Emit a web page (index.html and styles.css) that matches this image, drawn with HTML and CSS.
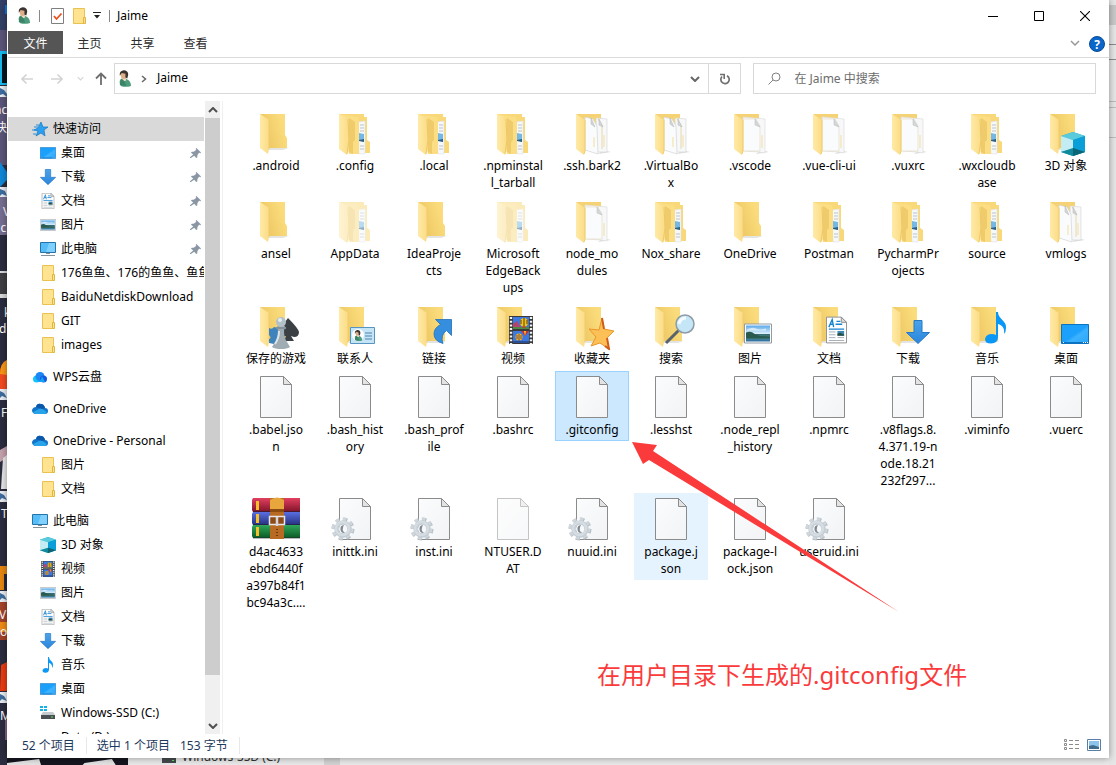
FILE: index.html
```html
<!DOCTYPE html>
<html lang="zh-CN">
<head>
<meta charset="utf-8">
<title>Jaime</title>
<link rel="stylesheet" href="styles.css">
</head>
<body>
<svg class="defs" aria-hidden="true">
  <defs>
    <linearGradient id="gFlap" x1="0" x2="1"><stop offset="0" stop-color="#ffeaa6"/><stop offset="1" stop-color="#fbdc86"/></linearGradient>
    <linearGradient id="gBack" x1="0" x2="1" y1="1" y2="0.6"><stop offset="0" stop-color="#e9c25c"/><stop offset="1" stop-color="#fbdc7c"/></linearGradient>
    <linearGradient id="gPage" x1="0" y1="0" x2="1" y2="1"><stop offset="0" stop-color="#fbfcfd"/><stop offset="1" stop-color="#f1f3f5"/></linearGradient>
    <linearGradient id="gBlue" x1="0" y1="0" x2="1" y2="1"><stop offset="0" stop-color="#1ba0fb"/><stop offset="0.5" stop-color="#1ba0fb"/><stop offset="0.6" stop-color="#3db2ff"/><stop offset="1" stop-color="#2aa6fb"/></linearGradient>
    <linearGradient id="gArrow" x1="0" y1="0" x2="0" y2="1"><stop offset="0" stop-color="#4ba3ea"/><stop offset="1" stop-color="#2b86dc"/></linearGradient>
    <linearGradient id="gRed" x1="0" y1="0" x2="0" y2="1"><stop offset="0" stop-color="#e2405f"/><stop offset="1" stop-color="#7d1328"/></linearGradient>
    <linearGradient id="gInd" x1="0" y1="0" x2="0" y2="1"><stop offset="0" stop-color="#5a6fe0"/><stop offset="1" stop-color="#25307e"/></linearGradient>
    <linearGradient id="gGrn" x1="0" y1="0" x2="0" y2="1"><stop offset="0" stop-color="#2fa85a"/><stop offset="1" stop-color="#0b5a25"/></linearGradient>
    <linearGradient id="gSky" x1="0" y1="0" x2="0" y2="1"><stop offset="0" stop-color="#5aa9ea"/><stop offset="0.5" stop-color="#d9eefa"/><stop offset="0.55" stop-color="#356b6b"/><stop offset="0.75" stop-color="#4d8c8c"/><stop offset="1" stop-color="#2e6ea6"/></linearGradient>

    <symbol id="folder" viewBox="0 0 48 48">
      <path d="M16 39H37L39 38 31 41H17Z" fill="#e4e4e4"/>
      <path d="M8 5H33V26L35 29V39H16L9 10Z" fill="url(#gBack)"/>
      <path d="M8 5L17 11V40L16 45 8 39Z" fill="url(#gFlap)"/>
      <path d="M17 11V40" stroke="#f0cc6e" fill="none"/>
    </symbol>
    <symbol id="folder-full" viewBox="0 0 48 48">
      <path d="M8 5H33V8H36V31L39 33V44H28L14 30Z" fill="#f8d878"/>
      <path d="M27 13L34 12V45H28Z" fill="#f6f8fa" stroke="#dfe3e6" stroke-width=".6"/>
      <path d="M29 16h4M29 19h4M29 22h4M29 37h4M29 40h4" stroke="#b9c4cc"/>
      <path d="M28 24l5 1v8l-5-2Z" fill="#75b8e6"/><path d="M28 31l5-1v3l-5-1Z" fill="#2c5f86"/>
      <path d="M8 5L27 8 28 13V45L18 45Z" fill="#fbdd83"/>
      <path d="M18 9L24 13V31L22 33V45L18 43Z" fill="#efcb6c"/>
      <path d="M8 5L17 9 18 31 16 46 8 40Z" fill="url(#gFlap)"/>
      <path d="M17 10L18 31 16 45" fill="none" stroke="#edc965"/>
    </symbol>
    <symbol id="folder-doc" viewBox="0 0 48 48">
      <path d="M35 41L43 43 30 45Z" fill="#ddd"/>
      <path d="M8 5H33V15H17Z" fill="#f5d374"/>
      <path d="M17 8L39 10V44L33 43 18 42Z" fill="#f7f8f9" stroke="#dcdcdc" stroke-width=".7"/>
      <path d="M17 10H30L34 17V42H17Z" fill="#fafbfc" stroke="#e3d9bd" stroke-width=".6"/>
      <path d="M29 10L34 18 29 16Z" fill="#d5d8da" stroke="#b9b9b9" stroke-width=".5"/>
      <path d="M36 26V39" stroke="#f3df9e"/>
      <path d="M8 5L17 11V42L16 46 8 40Z" fill="url(#gFlap)"/>
      <path d="M17 11V42L16 45" fill="none" stroke="#f0cd6d"/>
    </symbol>
    <symbol id="folder-docs" viewBox="0 0 48 48">
      <path d="M35 41L43 43 30 45Z" fill="#ddd"/>
      <path d="M8 5H33V15H17Z" fill="#f5d374"/>
      <path d="M28 9L39 10V43L29 43Z" fill="#f7f8f9" stroke="#d9d9d9" stroke-width=".7"/>
      <path d="M30 10L34 16V40" fill="none" stroke="#e6d8ac"/>
      <path d="M17 8L25 10 29 17 30 45 17 41Z" fill="#fafbfc" stroke="#d4d4d4" stroke-width=".7"/>
      <path d="M23 9L27 18 23 15ZM31 10l4 8-4-2Z" fill="#d3d6d8" stroke="#b5b5b5" stroke-width=".5"/>
      <path d="M26 28V38M36 26V38" stroke="#f3df9e"/>
      <path d="M8 5L17 11V42L16 46 8 40Z" fill="url(#gFlap)"/>
      <path d="M17 11V42L16 45" fill="none" stroke="#f0cd6d"/>
    </symbol>
    <symbol id="file" viewBox="0 0 48 48">
      <path d="M8.500 3.500H31.500L39.500 11.500V44.500H8.500Z" fill="url(#gPage)" stroke="#8b8b8b"/>
      <path d="M31.500 3.500V11.500H39.500Z" fill="#e3e3e3" stroke="#8b8b8b"/>
    </symbol>
    <symbol id="ini" viewBox="0 0 48 48">
      <use href="#file"/>
      <circle cx="12" cy="34" r="9.500" fill="none" stroke="#b4bec6" stroke-width="4" stroke-dasharray="4 3.460"/>
      <circle cx="11.500" cy="33.500" r="9.500" fill="none" stroke="#cfd7dd" stroke-width="3" stroke-dasharray="3.600 3.860"/>
      <circle cx="12" cy="34" r="6.500" fill="none" stroke="#c6ced5" stroke-width="4.500"/>
      <circle cx="11.500" cy="33.500" r="6.500" fill="none" stroke="#d6dde2" stroke-width="2.500"/>
      <circle cx="12" cy="34" r="4" fill="#f7f8f9"/>
      <path d="M13 30a4 4 0 1 0 1 8q-4-3-1-8Z" fill="#7d8994"/>
    </symbol>
    <symbol id="cube" viewBox="0 0 24 24">
      <path d="M12 0L24 4V20L12 24 0 20V4Z" fill="#1aa9c4"/>
      <path d="M12 0L24 4 12 8 0 4Z" fill="#59cbdc"/>
      <path d="M0 4L12 8V17L0 20Z" fill="#c3ecf3"/>
      <path d="M12 8L24 4V20L12 17Z" fill="#0a9fd8"/>
      <path d="M0 20L12 16 24 20 12 24Z" fill="#128a9e"/><path d="M12 16L24 20 12 24Z" fill="#0c6678"/>
    </symbol>
    <symbol id="film" viewBox="0 0 24 28">
      <path d="M0 0H24V28H0Z" fill="#3a3a3a"/>
      <path d="M2 1V28M22 1V28" stroke="#f2f2f2" stroke-width="2.400" stroke-dasharray="2 1.700"/>
      <path d="M4 1H20V13H4ZM4 15H20V27H4Z" fill="#3b79df"/>
      <path d="M4 8l4-3 3 5 4 3H4Z" fill="#b34470"/><path d="M4 11h16v2H4Z" fill="#4d8b45"/>
      <ellipse cx="15" cy="6.500" rx="4" ry="4.500" fill="#f2c21a"/><path d="M15 2v9M12 4v4M18 4v4" stroke="#453018" stroke-width=".9"/><path d="M13 11h4" stroke="#d43120"/>
      <path d="M12 15h8l-4 5Z" fill="#ca3030"/><path d="M15 15h2l-1 5Z" fill="#f4cc2a"/>
      <ellipse cx="10" cy="21" rx="3.500" ry="3.500" fill="#f3b21f"/><path d="M10 18v7M8 19v4M12 19v4" stroke="#4a3a68" stroke-width=".8"/><path d="M4 25h16v2H4Z" fill="#2c4f96"/>
    </symbol>
    <symbol id="photo" viewBox="0 0 28 20">
      <path d="M.5.5H27.500V19.500H.5Z" fill="#fff" stroke="#929ba3"/>
      <path d="M2 2H26V18H2Z" fill="url(#gSky)"/>
      <path d="M2 9q5-2 8 1t16 3v2H2Z" fill="#2a5a4d"/><path d="M3 6q5-3 9-1t10 0v2H3Z" fill="#fff" opacity=".6"/>
    </symbol>
    <symbol id="doc" viewBox="0 0 22 28">
      <path d="M.5.5H16L21.500 6V27.500H.5Z" fill="#fff" stroke="#8e8e8e"/><path d="M16 .5V6h5.500Z" fill="#ddd" stroke="#8e8e8e"/>
      <path d="M3 11L6.500 3 8 11M4 8h4M11 5h4M10 8h7M3 13h16" stroke="#1683d0" stroke-width="1.400" fill="none"/>
      <path d="M3 16h7M3 19h7M3 22h7M3 25h16M12 22h7" stroke="#a5adb3"/><path d="M12 15h7v5h-7Z" fill="#3e86b5"/><path d="M12 18l3-1 4 2v1h-7Z" fill="#275040"/>
    </symbol>
    <symbol id="down" viewBox="0 0 24 24">
      <path d="M8 .5H16V12.500H23.500L12 23.500.5 12.500H8Z" fill="url(#gArrow)" stroke="#2478c7"/>
    </symbol>
    <symbol id="note" viewBox="0 0 22 32">
      <path d="M11 0h2c0 7 9 9 8 16q0 4-2 6c1-6-2-9-6-10V25q0 6-7 6.500Q0 31.500 0 27q1-5 7-5 2 0 4 1Z" fill="#0b97f5"/>
    </symbol>
    <symbol id="desk" viewBox="0 0 28 20">
      <path d="M.5.5H27.500V19.500H.5Z" fill="url(#gBlue)" stroke="#0b73bf"/>
      <path d="M1 18.500H27" stroke="#0b73bf"/><path d="M2 18.500h1M22 18.500h1M24 18.500h1M26 18.500h1" stroke="#fff"/>
    </symbol>
    <symbol id="person" viewBox="0 0 14 18">
      <path d="M3 17Q0 11 4 9l3-1 3 2q4 2 4 7Q8 19 3 17Z" fill="#4d9c7e"/><path d="M2 16q0-6 3-7l2 3 2 5Z" fill="#3c8468"/>
      <path d="M4 7l4 1 1 3-2 1-3-3Z" fill="#f1d9bf"/>
      <ellipse cx="6" cy="5.500" rx="3" ry="4" fill="#ddb089"/><path d="M2 6Q1 1 6 0q5 0 5 5l-1 4-2-1V4L4 3Z" fill="#3b3330"/>
    </symbol>
    <symbol id="sfolder" viewBox="0 0 16 16">
      <path d="M2.500.5H13.500V15.500H2.500Z" fill="#ffe391" stroke="#e9c251"/><path d="M12.500 9.500H14.500V15.500H12.500Z" fill="#fbe08d" stroke="#e0b73f"/>
    </symbol>
    <symbol id="pc" viewBox="0 0 16 16">
      <path d="M.5 1.500H15.500V11.500H.5Z" fill="#57bdf9" stroke="#2575ab"/><path d="M9 2h6v9H6Z" fill="#7fd0fd"/>
      <path d="M6 12h4v1H6ZM1 14h14v1H1Z" fill="#85929c"/>
    </symbol>
    <symbol id="cloud" viewBox="0 0 16 16">
      <path d="M3 13Q0 12 0 9q1-3 4-3 1-4 5-3 3 0 4 4 3 0 3 3 0 3-3 3Z" fill="#1273ca"/>
      <path d="M1 11L9 7l6 4-2 2H3Z" fill="#28a5ea"/><path d="M4 6q1-4 5-3 3 0 4 4l-3 1Z" fill="#0b57a9"/>
    </symbol>
    <symbol id="wps" viewBox="0 0 16 16">
      <circle cx="4.500" cy="10" r="3.500" fill="#16c3f6"/><circle cx="8" cy="7.500" r="4.500" fill="#1b86f4"/><circle cx="11.500" cy="10" r="3.500" fill="#1659de"/><path d="M3 13Q9 13 10 7l3 6Z" fill="#12a2f8"/>
    </symbol>
    <symbol id="pin" viewBox="0 0 12 12"><path d="M7 0l5 5-1 1-1-1-2 3v2L7 11 4.500 8.500 1 11l-1 0 0-1 3.500-3L1 5l1-1h2l3-2-1-1Z" fill="#8a97a3"/></symbol>
    <symbol id="drive" viewBox="0 0 16 16">
      <path d="M0 1h3v2H0ZM4 1h3v2H4ZM0 4h3v2H0ZM4 4h3v2H4Z" fill="#13b2e8"/>
      <path d="M3 7h10l2 3H1Z" fill="#c5cace"/><path d="M1 10h14v4H1Z" fill="#4a4f54"/><path d="M11 12h2" stroke="#60e05a"/>
    </symbol>
    <symbol id="chev" viewBox="0 0 10 6"><path d="M1 1l4 4 4-4" fill="none" stroke="currentColor" stroke-width="1.500"/></symbol>
    <symbol id="chev-bold" viewBox="0 0 10 6"><path d="M1 1l4 4 4-4" fill="none" stroke="currentColor" stroke-width="2"/></symbol>
    <symbol id="arrowl" viewBox="0 0 12 10"><path d="M5.500.5L1 5l4.500 4.500M1 5h11" fill="none" stroke="currentColor" stroke-width="1.600"/></symbol>
  </defs>
</svg>

<div class="desktop">
  <svg class="wallpaper" viewBox="0 0 7 765" preserveAspectRatio="none" aria-hidden="true">
    <path d="M0 0H7V765H0Z" fill="#2b2c3f"/>
    <path d="M0 0H7V30H0Z" fill="#334067"/><path d="M0 30H7V51H0ZM0 97H7V165H0Z" fill="#5b5579"/>
    <path d="M5 5h2v9H5Z" fill="#1178e0"/>
    <path d="M0 51H7V54H2V83H7V85H0Z" fill="#16b9ef"/><path d="M2 54H7V83H2Z" fill="#06161f"/>
    <path d="M0 86H7V97H0ZM0 187H7V197H0ZM0 389H7V400H0ZM0 491H7V502H0ZM0 591H7V602H0ZM0 692H7V703H0Z" fill="#e9edf2"/>
    <path d="M0 88l4 2 3 4v3L3 94 0 95ZM0 189l5 2 2 5-5-2-2 2ZM0 391l4 2 3 5-5-2-2 2ZM0 493l4 2 3 5-5-2-2 2ZM0 593l4 2 3 5-5-2-2 2ZM0 694l4 2 3 5-5-2-2 2Z" fill="#3d6c9e"/>
    <path d="M0 162l7 10v8l-7 7Z" fill="#1087d7"/>
    <path d="M0 197H7V235H0Z" fill="#766e91"/>
    <path d="M0 272H7V296H0Z" fill="#3f3f43"/><path d="M0 294H7V298H0ZM0 271H7V273H0Z" fill="#d9d9d9"/>
    <path d="M7 360Q0 363 0 374V389H7Z" fill="#f24a22"/><path d="M7 360Q0 363 0 374l7 1Z" fill="#f99718"/>
    <path d="M0 450l7-4v12l-7 4Z" fill="#c3a0ad"/><path d="M3 458l4-3v34H1Z" fill="#e7e7e8"/>
    <path d="M0 566H7V590H0Z" fill="#e58611"/><path d="M4 574h3v16H4Z" fill="#27283c"/>
    <path d="M0 602H7V640H0Z" fill="#a3432a"/><path d="M0 622H7V632H0Z" fill="#ee8c15"/>
    <path d="M1 665l6-3v29H0Z" fill="#ea3a12"/>
    <path d="M5 720h2v20H5Z" fill="#7c6586"/>
    <g class="desktop-label"><text x="-6" y="114">nc</text><text x="-5" y="132">快</text><text x="3" y="216">V</text><text x="-7" y="232">uc</text><text x="4" y="317">k</text><text x="-1" y="333">d</text><text x="1" y="417">F</text><text x="1" y="518">T</text><text x="-1" y="619">VM</text><text x="0" y="636">o</text><text x="0" y="720">M</text></g>
  </svg>

  <main class="window">
    <header class="titlebar">
      <svg class="t-user"><use href="#person"/></svg>
      <span class="rule"></span>
      <svg class="t-doc" viewBox="0 0 13 16"><path d="M.5.5H12.500V15.500H.5Z" fill="#fff" stroke="#7f7f7f"/><path d="M3 8l2.500 3 5-5.500" fill="none" stroke="#e8511c" stroke-width="1.800"/></svg>
      <svg class="t-folder"><use href="#sfolder"/></svg>
      <svg class="t-more" viewBox="0 0 8 7"><path d="M0 0H8V1H0ZM1 3H7L4 6.500Z" fill="#222"/></svg>
      <span class="rule"></span>
      <h1>Jaime</h1>
      <div class="controls">
        <button type="button" aria-label="最小化"><svg viewBox="0 0 10 10"><path d="M0 5.500H10" stroke="#000"/></svg></button>
        <button type="button" aria-label="最大化"><svg viewBox="0 0 10 10"><path d="M.5.5H9.500V9.500H.5Z" fill="none" stroke="#000"/></svg></button>
        <button type="button" aria-label="关闭"><svg viewBox="0 0 10 10"><path d="M0 0L10 10M10 0L0 10" stroke="#000" stroke-width="1.100"/></svg></button>
      </div>
    </header>

    <nav class="ribbon">
      <button type="button" class="tab tab-file">文件</button>
      <button type="button" class="tab">主页</button>
      <button type="button" class="tab">共享</button>
      <button type="button" class="tab">查看</button>
      <button type="button" class="expand" aria-label="展开功能区"><svg class="chev"><use href="#chev"/></svg></button>
      <button type="button" class="help" aria-label="帮助">?</button>
    </nav>

    <div class="toolbar">
      <button type="button" class="go go-back" aria-label="后退"><svg class="arrow"><use href="#arrowl"/></svg></button>
      <button type="button" class="go go-forward" aria-label="前进"><svg class="arrow" viewBox="0 0 12 10"><path d="M6.500.5L11 5 6.500 9.500M11 5H0" fill="none" stroke="currentColor" stroke-width="1.600"/></svg></button>
      <button type="button" class="go go-recent" aria-label="最近位置"><svg viewBox="0 0 7 5"><use href="#chev" width="7" height="5"/></svg></button>
      <button type="button" class="go go-up" aria-label="上移"><svg class="up" viewBox="0 0 12 13"><path d="M1 6.500L6 1.500l5 5M6 1.500V13" fill="none" stroke="currentColor" stroke-width="1.800"/></svg></button>
      <div class="address">
        <svg class="t-user"><use href="#person"/></svg>
        <svg class="crumb" viewBox="0 0 6 8"><path d="M1 1l3.500 3L1 7" fill="none" stroke="#666" stroke-width="1.500"/></svg>
        <span class="path">Jaime</span>
        <button type="button" class="drop" aria-label="以前的位置"><svg class="chev"><use href="#chev-bold"/></svg></button>
        <button type="button" class="refresh" aria-label="刷新"><svg viewBox="0 0 12 12"><path d="M8 2.700A4.200 4.200 0 1 1 3 3.500" fill="none" stroke="#707070" stroke-width="1.700"/><path d="M1 1.500H5.200V6" fill="none" stroke="#707070" stroke-width="1.600"/></svg></button>
      </div>
      <label class="search">
        <svg viewBox="0 0 13 13"><circle cx="8" cy="5" r="4" fill="none" stroke="#818181"/><path d="M5 8L.5 12.500" stroke="#818181"/></svg>
        <input type="search" placeholder="在 Jaime 中搜索" aria-label="搜索">
      </label>
    </div>

    <div class="body">
      <aside class="tree">
        <ul>
          <li class="top selected"><svg viewBox="0 0 16 16"><path d="M9 1l2 5h5l-4 3 1 6-4-3-5 3 2-5-4-1 4-2Z" fill="#2b9ff0" stroke="#1477c2" stroke-width=".7"/><path d="M2 6h4M0 9h3M1 13h3M4 4h3" stroke="#2b8fd8"/></svg><span>快速访问</span></li>
          <li><svg><use href="#desk"/></svg><span>桌面</span><svg class="pin"><use href="#pin"/></svg></li>
          <li><svg><use href="#down"/></svg><span>下载</span><svg class="pin"><use href="#pin"/></svg></li>
          <li><svg><use href="#doc"/></svg><span>文档</span><svg class="pin"><use href="#pin"/></svg></li>
          <li><svg><use href="#photo"/></svg><span>图片</span><svg class="pin"><use href="#pin"/></svg></li>
          <li><svg><use href="#pc"/></svg><span>此电脑</span><svg class="pin"><use href="#pin"/></svg></li>
          <li><svg><use href="#sfolder"/></svg><span>176鱼鱼、176的鱼鱼、鱼鱼</span></li>
          <li><svg><use href="#sfolder"/></svg><span>BaiduNetdiskDownload</span></li>
          <li><svg><use href="#sfolder"/></svg><span>GIT</span></li>
          <li><svg><use href="#sfolder"/></svg><span>images</span></li>
        </ul>
        <ul><li class="top"><svg><use href="#wps"/></svg><span>WPS云盘</span></li></ul>
        <ul><li class="top"><svg><use href="#cloud"/></svg><span>OneDrive</span></li></ul>
        <ul>
          <li class="top"><svg><use href="#cloud"/></svg><span>OneDrive - Personal</span></li>
          <li><svg><use href="#sfolder"/></svg><span>图片</span></li>
          <li><svg><use href="#sfolder"/></svg><span>文档</span></li>
        </ul>
        <ul>
          <li class="top"><svg><use href="#pc"/></svg><span>此电脑</span></li>
          <li><svg><use href="#cube"/></svg><span>3D 对象</span></li>
          <li><svg><use href="#film"/></svg><span>视频</span></li>
          <li><svg><use href="#photo"/></svg><span>图片</span></li>
          <li><svg><use href="#doc"/></svg><span>文档</span></li>
          <li><svg><use href="#down"/></svg><span>下载</span></li>
          <li><svg><use href="#note"/></svg><span>音乐</span></li>
          <li><svg><use href="#desk"/></svg><span>桌面</span></li>
          <li><svg><use href="#drive"/></svg><span>Windows-SSD (C:)</span></li>
          <li><svg></svg><span>Data (D:)</span></li>
        </ul>
      </aside>
      <div class="scrollbar">
        <button type="button" aria-label="向上滚动"><svg class="chev flip"><use href="#chev-bold"/></svg></button>
        <div class="track"><div class="thumb"></div></div>
        <button type="button" aria-label="向下滚动"><svg class="chev"><use href="#chev-bold"/></svg></button>
      </div>

      <section class="files">
        <div class="item"><svg><use href="#folder"/></svg><span>.android</span></div>
        <div class="item"><svg><use href="#folder-full"/></svg><span>.config</span></div>
        <div class="item"><svg><use href="#folder-full"/></svg><span>.local</span></div>
        <div class="item"><svg><use href="#folder-full"/></svg><span>.npminstal<br>l_tarball</span></div>
        <div class="item"><svg><use href="#folder-docs"/></svg><span>.ssh.bark2</span></div>
        <div class="item"><svg><use href="#folder-docs"/></svg><span>.VirtualBo<br>x</span></div>
        <div class="item"><svg><use href="#folder-doc"/></svg><span>.vscode</span></div>
        <div class="item"><svg><use href="#folder-doc"/></svg><span>.vue-cli-ui</span></div>
        <div class="item"><svg><use href="#folder-doc"/></svg><span>.vuxrc</span></div>
        <div class="item"><svg><use href="#folder-full"/></svg><span>.wxcloudb<br>ase</span></div>
        <div class="item"><svg viewBox="0 0 48 48"><use href="#folder"/><use href="#cube" x="19" y="23" width="24" height="24"/></svg><span>3D 对象</span></div>

        <div class="item"><svg><use href="#folder"/></svg><span>ansel</span></div>
        <div class="item faded"><svg><use href="#folder-full"/></svg><span>AppData</span></div>
        <div class="item"><svg><use href="#folder"/></svg><span>IdeaProje<br>cts</span></div>
        <div class="item faded"><svg><use href="#folder-full"/></svg><span>Microsoft<br>EdgeBack<br>ups</span></div>
        <div class="item"><svg><use href="#folder-doc"/></svg><span>node_mo<br>dules</span></div>
        <div class="item"><svg><use href="#folder-full"/></svg><span>Nox_share</span></div>
        <div class="item"><svg><use href="#folder"/></svg><span>OneDrive</span></div>
        <div class="item"><svg><use href="#folder-full"/></svg><span>Postman</span></div>
        <div class="item"><svg><use href="#folder-full"/></svg><span>PycharmPr<br>ojects</span></div>
        <div class="item"><svg><use href="#folder-full"/></svg><span>source</span></div>
        <div class="item"><svg><use href="#folder-docs"/></svg><span>vmlogs</span></div>

        <div class="item"><svg viewBox="0 0 48 48"><use href="#folder"/><path d="M17 26q3 2 5-1l4 1v14l-4 2-5-1v-4q3-1 0-4Z" fill="#3f83bd"/><path d="M36 16q10 10 11 14 0 5-5 5l-3-1 3 5H32l2-5q-5 1-6-3 0-5 8-15Z" fill="#3b4045"/><path d="M25 24h8l-1 5q0 7 3 11l3 5q-3 2-9 2t-9-2l3-5q4-4 3-11Z" fill="#9facb4"/><circle cx="29" cy="20" r="5" fill="#b2c0c8"/><path d="M24 25h10v2H24Z" fill="#82919a"/><path d="M27 29q0 7-4 13" stroke="#dce4e8" stroke-width="2" fill="none"/><circle cx="28" cy="18" r="2" fill="#e6edf0"/></svg><span>保存的游戏</span></div>
        <div class="item"><svg viewBox="0 0 48 48"><use href="#folder"/><path d="M19.500 25.500H43.500V41.500H19.500Z" fill="#c5e5f7" stroke="#5595bf"/><circle cx="27" cy="33" r="6" fill="#fff"/><use href="#person" x="22" y="28" width="10" height="11"/><path d="M34 31h7M34 34h7M34 37h7" stroke="#4b83ad"/></svg><span>联系人</span></div>
        <div class="item"><svg viewBox="0 0 48 48"><use href="#folder"/><path d="M25.500 17.500H41.500V33.500L36.500 28.500Q30 33 33 41.500 24 39 24 32 24 26 30.500 22.500Z" fill="#368fde" stroke="#1f70b8" stroke-width=".8"/></svg><span>链接</span></div>
        <div class="item"><svg viewBox="0 0 48 48"><use href="#folder"/><use href="#film" x="20" y="14" width="24" height="28"/></svg><span>视频</span></div>
        <div class="item"><svg viewBox="0 0 48 48"><use href="#folder"/><path d="M34 16l2 11 10 2-7 7 2 11-9-6-9 3 5-9-7-8 10 1Z" fill="#fdc056" stroke="#e9962b"/><path d="M34 16l2 11M39 36l2 11-4-3" stroke="#cf5d19" stroke-width="2" fill="none"/></svg><span>收藏夹</span></div>
        <div class="item"><svg viewBox="0 0 48 48"><use href="#folder"/><path d="M32 28L19 41" stroke="#58636c" stroke-width="3"/><circle cx="38" cy="22" r="9" fill="#c4e6f6" stroke="#8e9aa4" stroke-width="1.500"/><path d="M32 22q1-6 7-6" stroke="#f4fcff" stroke-width="3" fill="none"/></svg><span>搜索</span></div>
        <div class="item"><svg viewBox="0 0 48 48"><use href="#folder"/><use href="#photo" x="18" y="21" width="28" height="21"/></svg><span>图片</span></div>
        <div class="item"><svg viewBox="0 0 48 48"><use href="#folder"/><use href="#doc" x="21" y="14" width="21" height="28"/></svg><span>文档</span></div>
        <div class="item"><svg viewBox="0 0 48 48"><use href="#folder"/><use href="#down" x="22" y="18" width="24" height="24"/></svg><span>下载</span></div>
        <div class="item"><svg viewBox="0 0 48 48"><use href="#folder"/><use href="#note" x="22" y="10" width="22" height="32"/></svg><span>音乐</span></div>
        <div class="item"><svg viewBox="0 0 48 48"><use href="#folder"/><use href="#desk" x="19" y="22" width="28" height="20"/></svg><span>桌面</span></div>

        <div class="item"><svg><use href="#file"/></svg><span>.babel.jso<br>n</span></div>
        <div class="item"><svg><use href="#file"/></svg><span>.bash_hist<br>ory</span></div>
        <div class="item"><svg><use href="#file"/></svg><span>.bash_prof<br>ile</span></div>
        <div class="item"><svg><use href="#file"/></svg><span>.bashrc</span></div>
        <div class="item picked"><svg><use href="#file"/></svg><span>.gitconfig</span></div>
        <div class="item"><svg><use href="#file"/></svg><span>.lesshst</span></div>
        <div class="item"><svg><use href="#file"/></svg><span>.node_repl<br>_history</span></div>
        <div class="item"><svg><use href="#file"/></svg><span>.npmrc</span></div>
        <div class="item"><svg><use href="#file"/></svg><span>.v8flags.8.<br>4.371.19-n<br>ode.18.21<br>232f297...</span></div>
        <div class="item"><svg><use href="#file"/></svg><span>.viminfo</span></div>
        <div class="item"><svg><use href="#file"/></svg><span>.vuerc</span></div>

        <div class="item"><svg viewBox="0 0 48 48">
          <path d="M1 3H48V17H1L0 15V5Z" fill="url(#gRed)"/><path d="M1 17H48V30H1L0 28V19Z" fill="url(#gInd)"/><path d="M1 30H48V43H1L0 41V32Z" fill="url(#gGrn)"/>
          <path d="M4 6h3v9H4ZM4 19h3v9H4ZM4 32h3v9H4Z" fill="#f6c02b"/><path d="M1 16.500H48M1 29.500H48M1 43H48" stroke="#241d33" opacity=".6"/>
          <path d="M18 3H32V44H18Z" fill="#b96a22"/><path d="M18 5q7-5 14 0v9H18Z" fill="#e7a73c"/><path d="M18 14H32V17H18Z" fill="#8c4a13"/>
          <path d="M17.500 21.500H32.500V29.500H17.500Z" fill="#8d4c17" stroke="#e6e6ea" stroke-width="1.500"/><path d="M25 22V31" stroke="#d5d5dc" stroke-width="2.500"/><path d="M25 34v1M25 37v1M25 40v1" stroke="#6b3910" stroke-width="2"/></svg><span>d4ac4633<br>ebd6440f<br>a397b84f1<br>bc94a3c....</span></div>
        <div class="item"><svg><use href="#ini"/></svg><span>inittk.ini</span></div>
        <div class="item"><svg><use href="#ini"/></svg><span>inst.ini</span></div>
        <div class="item faded"><svg><use href="#file"/></svg><span>NTUSER.D<br>AT</span></div>
        <div class="item"><svg><use href="#ini"/></svg><span>nuuid.ini</span></div>
        <div class="item hovered"><svg><use href="#file"/></svg><span>package.j<br>son</span></div>
        <div class="item"><svg><use href="#file"/></svg><span>package-l<br>ock.json</span></div>
        <div class="item"><svg><use href="#ini"/></svg><span>useruid.ini</span></div>

        <svg class="pointer" viewBox="0 0 268 172" aria-hidden="true"><path d="M0 1L25 4 21 10 267 171 17 19 11 23Z" fill="#fb3b3b"/></svg>
        <p class="note">在用户目录下生成的.gitconfig文件</p>
      </section>
    </div>

    <footer class="status">
      <span class="count">52 个项目</span>
      <span class="picked-info">选中 1 个项目</span>
      <span class="size">153 字节</span>
      <div class="views">
        <button type="button" aria-label="详细信息"><svg viewBox="0 0 16 12"><path d="M.5.5h2v2h-2ZM.5 4.500h2v2h-2ZM.5 8.500h2v2h-2Z" fill="none" stroke="#8a8a8a"/><path d="M5 1.500h4M5 5.500h4M5 9.500h4M11 1.500h4M11 5.500h4M11 9.500h4" stroke="#8a8a8a"/></svg></button>
        <button type="button" aria-label="大图标"><svg viewBox="0 0 16 12"><path d="M1.500.5H14.500V11.500H1.500Z" fill="#fff" stroke="#5b7fa3"/><path d="M3 2H13V10H3Z" fill="#8cc4ec"/><path d="M3 7l4-1 6 2v2H3Z" fill="#3e6d8c"/></svg></button>
      </div>
    </footer>
  </main>

  <svg class="behind-right" viewBox="0 0 7 765" preserveAspectRatio="none" aria-hidden="true">
    <path d="M0 0H7V765H0Z" fill="#e6e6e6"/><path d="M0 5H7V25H0Z" fill="#c9c9c9"/>
    <path d="M0 44.500H7M0 59.500H7" stroke="#8b8b8b"/><path d="M0 101.500H7M0 107.500H7M0 137.500H7" stroke="#bdbdbd"/>
  </svg>
  <div class="behind-bottom">
    <svg class="dark" viewBox="0 0 128 7" preserveAspectRatio="none" aria-hidden="true"><path d="M0 0H128V7H0Z" fill="#14151f"/><path d="M0 5L34 1 36 7H0ZM82 5l29-4 4 6H80Z" fill="#e3e3e3"/></svg>
    <svg class="disk" viewBox="0 0 14 5" aria-hidden="true"><path d="M0 0H14V5H0Z" fill="#45494d"/><path d="M10 2.500h2" stroke="#60e05a"/></svg>
    <span>Windows-SSD (C:)</span>
    <i class="bar"></i>
  </div>
</div>
</body>
</html>
```

FILE: styles.css
```css
* { box-sizing: border-box; }

body {
  margin: 0;
  font: 12px/17px "Noto Sans", "Noto Sans CJK SC", sans-serif;
  color: #000;
}

button {
  margin: 0;
  padding: 0;
  border: 0;
  background: none;
  font: inherit;
  color: inherit;
  display: flex;
  align-items: center;
  justify-content: center;
}

svg { display: block; flex: none; }
.defs { position: absolute; width: 0; height: 0; }

.desktop {
  display: grid;
  grid-template-columns: 7px minmax(0, 1fr) 7px;
  grid-template-rows: minmax(0, 1fr) 7px;
  height: 100vh;
  overflow: hidden;
}
.wallpaper { grid-row: 1 / 3; width: 7px; height: 100%; }
.desktop-label { fill: #fff; font-size: 12px; }
.behind-right { grid-column: 3; grid-row: 1 / 3; width: 7px; height: 100%; }
.behind-bottom {
  grid-column: 2;
  grid-row: 2;
  display: flex;
  align-items: flex-start;
  overflow: hidden;
  background: #e9e9e9;
}
.dark { width: 121px; height: 7px; }
.disk { width: 14px; height: 5px; margin: 0 6px 0 34px; }
.behind-bottom span { line-height: 17px; margin-top: -10px; color: #333; }
.bar { width: 16px; height: 7px; margin-left: 44px; background: #d2d2d2; }

.window {
  display: flex;
  flex-direction: column;
  background: #fff;
  box-shadow: 0 0 7px rgba(0, 0, 0, .4);
  position: relative;
  padding-left: 1px;
}

/* Title bar */
.titlebar { display: flex; align-items: center; height: 31px; padding: 0 1px 0 9px; }
.t-user { width: 13px; height: 17px; }
.rule { width: 1px; height: 12px; background: #888; margin: 0 11px 0 9px; }
.t-doc { width: 13px; height: 16px; }
.t-folder { width: 16px; height: 16px; margin-left: 7px; }
.t-more { width: 8px; height: 7px; margin-left: 6px; }
.t-more + .rule { margin: 0 7px 0 8px; }
.titlebar h1 { margin: 0; font-size: 12px; font-weight: 400; }
.controls { display: flex; margin-left: auto; height: 100%; }
.controls button { width: 46px; }
.controls svg { width: 10px; height: 10px; }

/* Ribbon tabs */
.ribbon {
  display: flex;
  align-items: flex-start;
  height: 27px;
  border-bottom: 1px solid #dadbdc;
  color: #2b2b2b;
}
.tab { width: 53px; height: 23px; padding-top: 2px; }
.tab-file { width: 55px; background: #555; color: #fff; }
.expand { margin-left: auto; width: 24px; height: 24px; color: #999; }
.chev { width: 10px; height: 6px; }
.help {
  width: 16px;
  height: 16px;
  margin: 5px 4px 0 2px;
  border-radius: 50%;
  background: #0a66c8;
  border: 1px solid #0a4d94;
  color: #fff;
  font-weight: 700;
}

/* Address row */
.toolbar { display: flex; align-items: center; padding: 5px 13px 7px 5px; }
.go { height: 31px; color: #d4d4d4; }
.go-back { width: 28px; }
.go-forward { width: 32px; }
.go-recent { width: 14px; }
.go-recent svg { width: 7px; height: 5px; }
.go-up { width: 27px; color: #6e6e6e; }
.arrow { width: 12px; height: 10px; }
.up { width: 12px; height: 13px; }
.address, .search {
  display: flex;
  align-items: center;
  height: 31px;
  border: 1px solid #d9d9d9;
  min-width: 0;
}
.address { flex: 628 1 0; }
.address .t-user { margin-left: 3px; }
.crumb { width: 6px; height: 8px; margin: 0 10px; }
.path { flex: 1; padding-bottom: 2px; }
.drop { width: 26px; height: 100%; color: #666; }
.refresh { width: 32px; height: 100%; border-left: 1px solid #d9d9d9; }
.refresh svg { width: 12px; height: 12px; }
.search { flex: 342 1 0; margin-left: 12px; }
.search svg { width: 13px; height: 13px; margin-left: 14px; }
.search input {
  flex: 1;
  min-width: 0;
  margin-left: 13px;
  padding: 0;
  border: 0;
  outline: 0;
  background: none;
  font: inherit;
}
.search input::placeholder { color: #6d6d6d; opacity: 1; }

/* Navigation tree */
.body { display: flex; flex: 1; min-height: 0; }
.tree { width: 197px; padding: 16px 1px 0 0; overflow: hidden; }
.tree ul { margin: 0 0 8px; padding: 0; list-style: none; }
.tree li {
  display: flex;
  align-items: center;
  gap: 5px;
  height: 24px;
  padding-left: 32px;
  white-space: nowrap;
  overflow: hidden;
}
.tree li.top { padding-left: 24px; }
.tree li.selected { background: #d9d9d9; }
.tree li svg { width: 16px; height: 16px; }
.tree li span { padding-bottom: 2px; }
.tree li .pin { width: 11px; height: 11px; margin: 0 3px 0 auto; }

.scrollbar { display: flex; flex-direction: column; width: 15px; background: #f0f0f0; color: #505050; }
.scrollbar button { height: 17px; }
.flip { transform: rotate(180deg); }
.track { flex: 1; }
.thumb { height: 93%; background: #cdcdcd; }

/* File grid */
.files {
  flex: 1;
  position: relative;
  display: grid;
  grid-template-columns: repeat(auto-fill, 74px);
  gap: 1px 5px;
  align-content: start;
  margin-left: 2px;
  border-left: 1px solid #f0f0f0;
  padding: 6px 0 0 16px;
}
.item {
  display: flex;
  flex-direction: column;
  align-items: center;
  align-self: start;
  padding: 2px 0 3px;
  text-align: center;
  white-space: nowrap;
}
.item svg { width: 48px; height: 48px; }
.faded svg { opacity: .5; }
.picked { background: #cce8ff; box-shadow: inset 0 0 0 1px #99d1ff; }
.hovered { background: #e5f3ff; }

.pointer { position: absolute; left: 409px; top: 340px; width: 268px; height: 172px; }
.note {
  position: absolute;
  left: 374px;
  top: 557px;
  margin: 0;
  font-size: 24px;
  line-height: 34px;
  white-space: nowrap;
  color: #fb3b3b;
}

/* Status bar */
.status { display: flex; align-items: center; height: 24px; padding: 0 7px 2px 14px; color: #1e395b; }
.status span { line-height: 17px; }
.count, .size { padding-right: 11px; border-right: 1px solid #e8e8e8; }
.picked-info { padding: 0 10px; }
.views { display: flex; gap: 6px; margin-left: auto; }
.views svg { width: 16px; height: 12px; }
```
